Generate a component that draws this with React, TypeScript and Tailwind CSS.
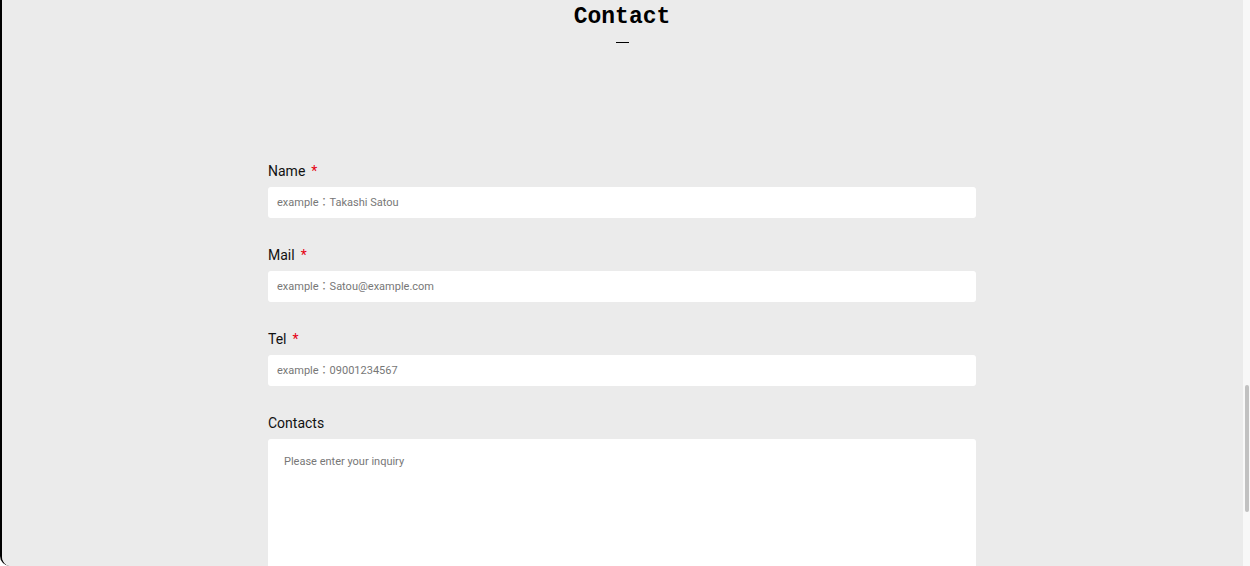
import React from 'react';

const fieldFont = { fontFamily: 'Roboto, "Noto Sans CJK JP", sans-serif' };

interface FieldProps {
    label: string;
    placeholder: string;
    required?: boolean;
}

const Field: React.FC<FieldProps> = ({ label, placeholder, required }) => (
    <div className="flex flex-col">
        <label className="flex items-center gap-[6px] h-[20px] pt-[2px] text-[14px] text-[#111] leading-none">
            {label}
            {required && <span className="text-[#e60012] text-[14px]">*</span>}
        </label>
        <input
            type="text"
            placeholder={placeholder}
            className="mt-[7px] h-[31px] w-full rounded-[3px] bg-white px-[9px] text-[11px] text-[#333] placeholder:text-[#777] outline-none"
        />
    </div>
);

export default function App() {
    return (
        <div className="h-[566px] w-[1250px] overflow-hidden bg-white" style={fieldFont}>
            <div className="flex h-full border-l-2 border-black rounded-bl-[10px] overflow-hidden">
                <main className="flex-1 bg-[#ebebeb] pr-[1px]">
                    <div className="flex flex-col items-center pt-[3px]">
                        <h2
                            className="text-[23px] font-bold text-black leading-[28px]"
                            style={{ fontFamily: '"Liberation Mono", "Courier New", monospace' }}
                        >
                            Contact
                        </h2>
                        <span className="mt-[11px] block h-[1px] w-[13px] bg-black" />
                    </div>

                    <form className="mx-auto mt-[117px] flex w-[708px] flex-col gap-[26px]">
                        <Field label="Name" placeholder="example：Takashi Satou" required />
                        <Field label="Mail" placeholder="example：Satou@example.com" required />
                        <Field label="Tel" placeholder="example：09001234567" required />
                        <div className="flex flex-col">
                            <label className="flex items-center h-[20px] pt-[2px] text-[14px] text-[#111] leading-none">Contacts</label>
                            <textarea
                                placeholder="Please enter your inquiry"
                                className="mt-[7px] h-[200px] w-full resize-none rounded-[3px] bg-white px-[16px] py-[15px] text-[11px] text-[#333] placeholder:text-[#777] outline-none"
                            />
                        </div>
                    </form>
                </main>

                {/* scrollbar */}
                <div className="w-[7px] bg-[#f8f8f8] pt-[385px]">
                    <div className="ml-[2px] h-[127px] w-[4px] rounded-full bg-[#c1c1c1]" />
                </div>
            </div>
        </div>
    );
}
